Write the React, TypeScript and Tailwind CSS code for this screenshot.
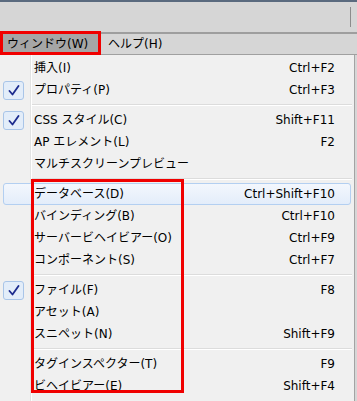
type Item = { label: string; key?: string; checked?: boolean; hot?: boolean } | "sep";

const ITEMS: Item[] = [
  { label: "挿入(I)", key: "Ctrl+F2" },
  { label: "プロパティ(P)", key: "Ctrl+F3", checked: true },
  "sep",
  { label: "CSS スタイル(C)", key: "Shift+F11", checked: true },
  { label: "AP エレメント(L)", key: "F2" },
  { label: "マルチスクリーンプレビュー" },
  "sep",
  { label: "データベース(D)", key: "Ctrl+Shift+F10", hot: true },
  { label: "バインディング(B)", key: "Ctrl+F10" },
  { label: "サーバービヘイビアー(O)", key: "Ctrl+F9" },
  { label: "コンポーネント(S)", key: "Ctrl+F7" },
  "sep",
  { label: "ファイル(F)", key: "F8", checked: true },
  { label: "アセット(A)" },
  { label: "スニペット(N)", key: "Shift+F9" },
  "sep",
  { label: "タグインスペクター(T)", key: "F9" },
  { label: "ビヘイビアー(E)", key: "Shift+F4" },
];

function Check() {
  return (
    <span className="flex h-[19px] w-[21px] items-center justify-center rounded-[3px] border border-[#a9c5e8] bg-[#e3edf9]">
      <svg width="12" height="11" viewBox="0 0 12 11">
        <path d="M1.5 6 L4.5 9.5 L10.5 1" fill="none" stroke="#1c2b8e" strokeWidth="1.8" strokeLinecap="round" strokeLinejoin="round" />
      </svg>
    </span>
  );
}

function Row({ item }: { item: Exclude<Item, "sep"> }) {
  return (
    <div className="px-[3px]">
      <div
        className={
          item.hot
            ? "flex h-[22px] items-center rounded-[3px] border border-[#b3cff1] bg-[linear-gradient(#f3f7fd,#e3edfa)]"
            : "flex h-[22px] items-center rounded-[3px] border border-transparent"
        }
      >
        <div className="flex w-[26px] items-center -ml-px">{item.checked && <Check />}</div>
        <span className="flex-1 pl-[5px] whitespace-nowrap">{item.label}</span>
        {item.key && <span className="pr-[15px] whitespace-nowrap">{item.key}</span>}
      </div>
    </div>
  );
}

export default function App() {
  return (
    <div className="relative h-[401px] w-[357px] overflow-hidden bg-[#d6d6d6] font-['DejaVu_Sans','Noto_Sans_CJK_JP',sans-serif] text-[12px] text-black">
      <div className="h-[2px] bg-[#5a6a7e]" />
      {/* toolbar strip */}
      <div className="flex h-[30px] items-center justify-end pr-[6px]">
        <div className="h-[20px] w-px bg-[#8c8c8c]" />
      </div>
      <div className="h-[2px] bg-[#9e9e9e]" />

      {/* menu bar */}
      <div className="flex h-[20px] items-center">
        <div className="flex h-full w-[100px] items-center bg-[#a6a6a6] pl-[7px]">ウィンドウ(W)</div>
        <div className="pl-[8px]">ヘルプ(H)</div>
      </div>
      <div className="h-px bg-[#a0a0a0]" />

      {/* dropdown */}
      <div className="h-[346px] w-[355px] border-r border-[#a3a3a3] bg-[linear-gradient(to_right,#f0f0f0_30px,#e2e3e3_30px,#e2e3e3_31px,#ffffff_31px,#ffffff_32px,#f0f0f0_32px)] pt-[2px]">
        {ITEMS.map((it, i) =>
          it === "sep" ? (
            <div key={i} className="flex h-[8px] flex-col justify-center pl-[32px] pr-[2px]">
              <div className="h-px bg-[#dcdcdc]" />
              <div className="h-px bg-white" />
            </div>
          ) : (
            <Row key={i} item={it} />
          ),
        )}
      </div>

      {/* red annotation frames */}
      <div className="absolute left-0 top-[31px] h-[24px] w-[101px] border-[3px] border-[#f00000]" />
      <div className="absolute left-[31px] top-[179px] h-[214px] w-[153px] border-[3px] border-[#f00000]" />
    </div>
  );
}
